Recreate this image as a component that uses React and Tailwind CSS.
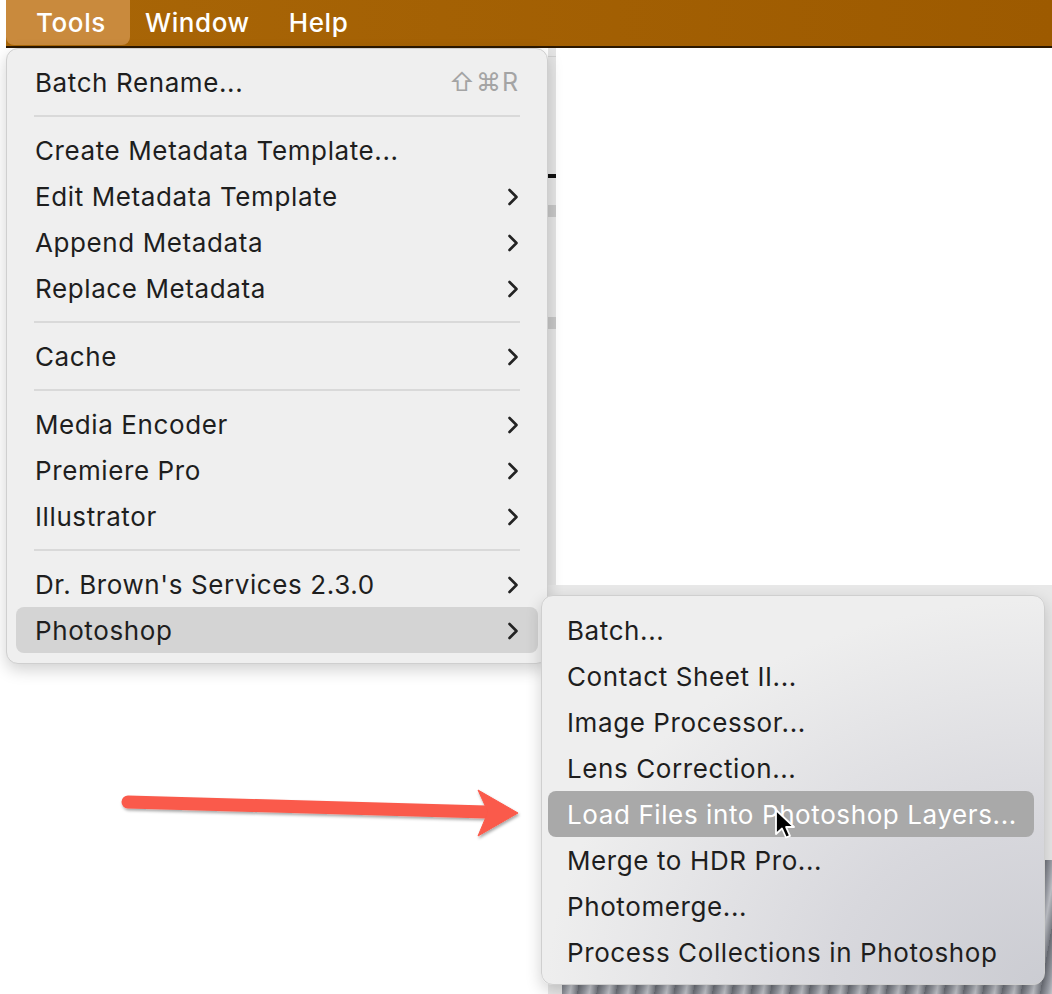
import React from "react";

const font = { fontFamily: "Inter, 'Noto Sans', 'DejaVu Sans', sans-serif" };

const mainItems = [
  { label: "Batch Rename...", shortcut: "⇧⌘R" },
  { sep: true },
  { label: "Create Metadata Template..." },
  { label: "Edit Metadata Template", sub: true },
  { label: "Append Metadata", sub: true },
  { label: "Replace Metadata", sub: true },
  { sep: true },
  { label: "Cache", sub: true },
  { sep: true },
  { label: "Media Encoder", sub: true },
  { label: "Premiere Pro", sub: true },
  { label: "Illustrator", sub: true },
  { sep: true },
  { label: "Dr. Brown's Services 2.3.0", sub: true },
  { label: "Photoshop", sub: true, active: true },
];

const subItems = [
  "Batch...",
  "Contact Sheet II...",
  "Image Processor...",
  "Lens Correction...",
  "Load Files into Photoshop Layers...",
  "Merge to HDR Pro...",
  "Photomerge...",
  "Process Collections in Photoshop",
];

const Chevron = () => (
  <svg width="12" height="18" viewBox="0 0 12 18" className="shrink-0">
    <path d="M2.5 2 L9.5 9 L2.5 16" fill="none" stroke="#232323" strokeWidth="2.6" strokeLinecap="round" strokeLinejoin="round" />
  </svg>
);

const MainMenu = () => (
  <div className="absolute left-[6px] top-[48px] w-[542px] rounded-[12px] bg-[#efefef] border border-[#cfcfcf] shadow-[0_6px_16px_rgba(0,0,0,0.18)] py-[10px] px-[9px]">
    {mainItems.map((it, i) =>
      it.sep ? (
        <div key={i} className="h-[22px] flex items-center px-[18px]">
          <div className="h-[2px] w-full bg-[#d9d9d9]" />
        </div>
      ) : (
        <div
          key={i}
          className={
            "h-[46px] flex items-center justify-between pl-[19px] pr-[19px] pt-[1px] rounded-[8px] text-[26px] tracking-[0.6px] text-[#1e1e1e] " +
            (it.active ? "bg-[#d4d4d4]" : "")
          }
        >
          <span>{it.label}</span>
          {it.shortcut && <span className="text-[#a4a4a4] tracking-[1px] text-[25px]">{it.shortcut}</span>}
          {it.sub && <Chevron />}
        </div>
      )
    )}
  </div>
);

const SubMenu = () => (
  <div className="absolute left-[541px] top-[595px] w-[504px] h-[390px] rounded-[12px] border border-[#cfcfcf] shadow-[0_6px_16px_rgba(0,0,0,0.18)] pt-[11px] pl-[6px] pr-[10px] bg-[radial-gradient(ellipse_at_100%_100%,#cbccd2_0%,#d8d8dd_30%,#eeeeee_70%)]">
    {subItems.map((label, i) => (
      <div
        key={i}
        className={
          "h-[46px] flex items-center pl-[19px] pt-[1px] rounded-[8px] text-[26px] tracking-[0.6px] " +
          (i === 4 ? "bg-[#a9a9a9] text-white" : "text-[#1e1e1e]")
        }
      >
        {label}
      </div>
    ))}
  </div>
);

const RedArrow = () => (
  <svg className="absolute left-[110px] top-[780px]" width="420" height="70" viewBox="110 780 420 70">
    <defs>
      <filter id="sh" x="-10%" y="-50%" width="120%" height="200%">
        <feDropShadow dx="1" dy="2" stdDeviation="1.5" floodColor="#000" floodOpacity="0.35" />
      </filter>
    </defs>
    <g filter="url(#sh)" fill="#fa5a4b" stroke="#fa5a4b">
      <line x1="128" y1="802" x2="486" y2="812" strokeWidth="13" strokeLinecap="round" />
      <polygon points="478,790 518,813 478,836 488,812" strokeWidth="1" strokeLinejoin="round" />
    </g>
  </svg>
);

const Cursor = () => (
  <svg className="absolute left-[773px] top-[808px]" width="30" height="36" viewBox="0 0 30 36">
    <path d="M3 2 L3 26 L9 20.5 L13 29.5 L17 27.8 L13 19 L21 19 Z" fill="#000" stroke="#fff" strokeWidth="1.8" strokeLinejoin="round" />
  </svg>
);

export default function App() {
  return (
    <div className="relative w-[1052px] h-[994px] overflow-hidden bg-white" style={font}>
      {/* menu bar */}
      <div className="ml-[6px] h-[48px] flex items-start border-b-2 border-[#2a1700] bg-[linear-gradient(90deg,#a96607,#9d5a00)] text-white text-[26px] tracking-[0.6px] font-medium">
        <div className="h-[45px] w-[124px] pl-[30px] flex items-center rounded-b-[8px] bg-[#c98a3d]">Tools</div>
        <div className="h-[45px] ml-[15px] flex items-center">Window</div>
        <div className="h-[45px] ml-[39px] flex items-center">Help</div>
      </div>

      {/* window behind the menus */}
      <div className="flex h-[946px]">
        <div className="w-[548px] bg-white" />
        <div className="flex-1 flex flex-col">
          <div className="h-[537px] flex">
            <div className="w-[8px] bg-[#e4e4e4] flex flex-col">
              <div className="h-[30px] mt-[8px] border-t border-[#cfcfcf]" />
              <div className="h-[4px] mt-[88px] bg-[#111]" />
              <div className="h-[12px] mt-[27px] bg-[#c6c6c6]" />
              <div className="h-[12px] mt-[100px] bg-[#c6c6c6]" />
            </div>
            <div className="flex-1 bg-white" />
          </div>
          <div className="flex-1 bg-[#e8e8e8] pl-[14px] pt-[275px] flex">
            <div className="flex-1 bg-[repeating-linear-gradient(100deg,#6b6e76_0px,#9a9da5_7px,#c4c6cc_12px,#7c7f87_19px)]" />
          </div>
        </div>
      </div>

      <MainMenu />
      <SubMenu />
      <RedArrow />
      <Cursor />
    </div>
  );
}
